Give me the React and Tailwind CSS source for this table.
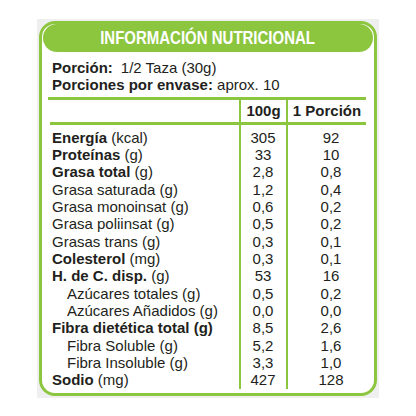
const rows = [
  { b: "Energía", r: " (kcal)", a: "305", p: "92" },
  { b: "Proteínas", r: " (g)", a: "33", p: "10" },
  { b: "Grasa total", r: " (g)", a: "2,8", p: "0,8" },
  { r: "Grasa saturada (g)", a: "1,2", p: "0,4" },
  { r: "Grasa monoinsat (g)", a: "0,6", p: "0,2" },
  { r: "Grasa poliinsat (g)", a: "0,5", p: "0,2" },
  { r: "Grasas trans (g)", a: "0,3", p: "0,1" },
  { b: "Colesterol", r: " (mg)", a: "0,3", p: "0,1" },
  { b: "H. de C. disp.", r: " (g)", a: "53", p: "16" },
  { r: "Azúcares totales (g)", a: "0,5", p: "0,2", sub: true },
  { r: "Azúcares Añadidos (g)", a: "0,0", p: "0,0", sub: true },
  { b: "Fibra dietética total (g)", a: "8,5", p: "2,6" },
  { r: "Fibra Soluble (g)", a: "5,2", p: "1,6", sub: true },
  { r: "Fibra Insoluble (g)", a: "3,3", p: "1,0", sub: true },
  { b: "Sodio", r: " (mg)", a: "427", p: "128" },
];

export default function App() {
  return (
    <div className="w-[416px] h-[416px] bg-white pt-[19px] pl-[37px] text-[#231f20] font-['Liberation_Sans',Arial,sans-serif] text-[15px]">
      <div className="w-[342px] h-[379px] bg-[#efefef] p-[2px]">
        <div className="h-full rounded-[16px] border-[3px] border-[#8cc63f] bg-white">
          {/* header pill */}
          <div className="mx-[1px] h-[28px] rounded-full bg-[#8cc63f] flex items-center justify-center">
            <span className="inline-block scale-x-[0.81] whitespace-nowrap text-white font-bold text-[18.5px] leading-none">
              INFORMACIÓN NUTRICIONAL
            </span>
          </div>

          <div className="pl-[10px] mt-[7px] leading-[17.33px]">
            <div>
              <span className="font-bold">Porción:</span>
              <span className="ml-[8px]">1/2 Taza (30g)</span>
            </div>
            <div>
              <span className="font-bold">Porciones por envase:</span> aprox. 10
            </div>
          </div>

          <div className="ml-[6px] w-[318px] mt-[3px]">
            <div className="h-[3px] bg-[#8cc63f]" />
            <div className="grid grid-cols-[191px_47px_80px] h-[22px] font-bold">
              <div />
              <div className="border-l-2 border-[#8cc63f] flex items-center justify-center">100g</div>
              <div className="border-l-2 border-[#8cc63f] flex items-center justify-center">1 Porción</div>
            </div>
            <div className="h-[3px] bg-[#8cc63f] ml-[2px]" />
            <div className="grid grid-cols-[191px_47px_80px] leading-[17.33px]">
              <div className="pt-[4px] pl-[4px]">
                {rows.map((row, i) => (
                  <div key={i} className={row.sub ? "pl-[15px] whitespace-nowrap" : "whitespace-nowrap"}>
                    {row.b && <span className="font-bold">{row.b}</span>}
                    {row.r}
                  </div>
                ))}
              </div>
              <div className="pt-[4px] border-l-2 border-[#8cc63f] text-center pr-[1px]">
                {rows.map((row, i) => (
                  <div key={i}>{row.a}</div>
                ))}
              </div>
              <div className="pt-[4px] border-l-2 border-[#8cc63f] text-center pl-[8px]">
                {rows.map((row, i) => (
                  <div key={i}>{row.p}</div>
                ))}
              </div>
            </div>
          </div>
        </div>
      </div>
    </div>
  );
}
